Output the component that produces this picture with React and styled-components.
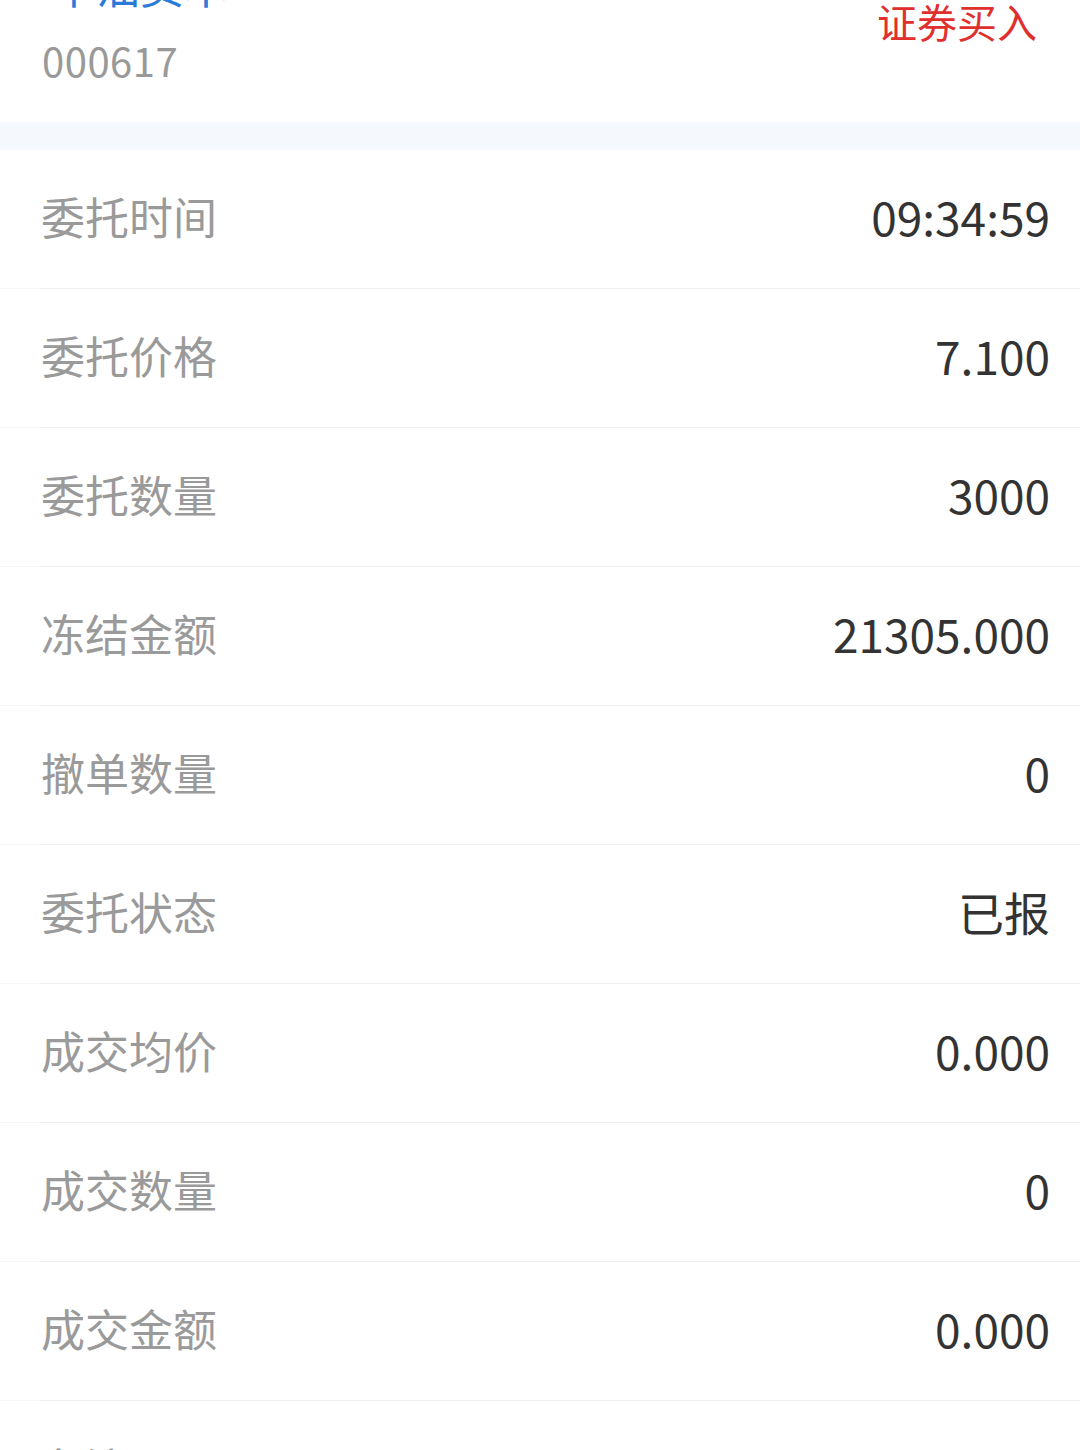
import React from 'react';
import styled, { createGlobalStyle } from 'styled-components';

const GlobalStyle = createGlobalStyle`
    html, body {
        margin: 0;
        padding: 0;
        background: #ffffff;
    }
    body {
        font-family: "Noto Sans CJK SC", "Noto Sans", sans-serif;
        overflow: hidden;
    }
`;

const Page = styled.div`
    width: 1080px;
    height: 1450px;
    overflow: hidden;
    background: #ffffff;
`;

// page is scrolled a little, so the stock name is cut at the top
const Header = styled.div`
    display: flex;
    justify-content: space-between;
    align-items: flex-start;
    margin-top: -41px;
    height: 163px;
    padding: 0 43px 0 42px;
    box-sizing: border-box;
`;

const StockInfo = styled.div`
    display: flex;
    flex-direction: column;
`;

const StockName = styled.div`
    font-size: 44px;
    line-height: 52px;
    color: #2b7bd9;
    padding-left: 10px;
`;

const StockCode = styled.div`
    margin-top: 21px;
    font-size: 40px;
    line-height: 56px;
    color: #999999;
    letter-spacing: 0.5px;
`;

const TradeType = styled.div`
    margin-top: 36px;
    font-size: 40px;
    line-height: 52px;
    color: #e0302e;
`;

const Gap = styled.div`
    height: 28px;
    background: #f5f9fe;
`;

const Row = styled.div`
    display: flex;
    padding-left: 40px;
    border-bottom: 1px solid #f7f7f7;
`;

const RowInner = styled.div`
    flex: 1;
    display: flex;
    justify-content: space-between;
    align-items: center;
    height: 139px;
    box-sizing: border-box;
    margin-bottom: -1px;
    padding: 0 30px 6px 0;
    border-bottom: 1px solid #eeeeee;
`;

const Label = styled.span`
    font-size: 44px;
    color: #9a9a9a;
    margin-left: 1px;
`;

const Value = styled.span`
    font-size: 46px;
    color: #333333;
`;

const details = [
    { label: '委托时间', value: '09:34:59' },
    { label: '委托价格', value: '7.100' },
    { label: '委托数量', value: '3000' },
    { label: '冻结金额', value: '21305.000' },
    { label: '撤单数量', value: '0' },
    { label: '委托状态', value: '已报' },
    { label: '成交均价', value: '0.000' },
    { label: '成交数量', value: '0' },
    { label: '成交金额', value: '0.000' },
    { label: '备注', value: '' },
];

function App() {
    return (
        <Page>
            <GlobalStyle />
            <Header>
                <StockInfo>
                    <StockName>中油资本</StockName>
                    <StockCode>000617</StockCode>
                </StockInfo>
                <TradeType>证券买入</TradeType>
            </Header>
            <Gap />
            {details.map((item, index) => (
                <Row key={`row-${index}`}>
                    <RowInner>
                        <Label>{item.label}</Label>
                        <Value>{item.value}</Value>
                    </RowInner>
                </Row>
            ))}
        </Page>
    );
}

export default App;
